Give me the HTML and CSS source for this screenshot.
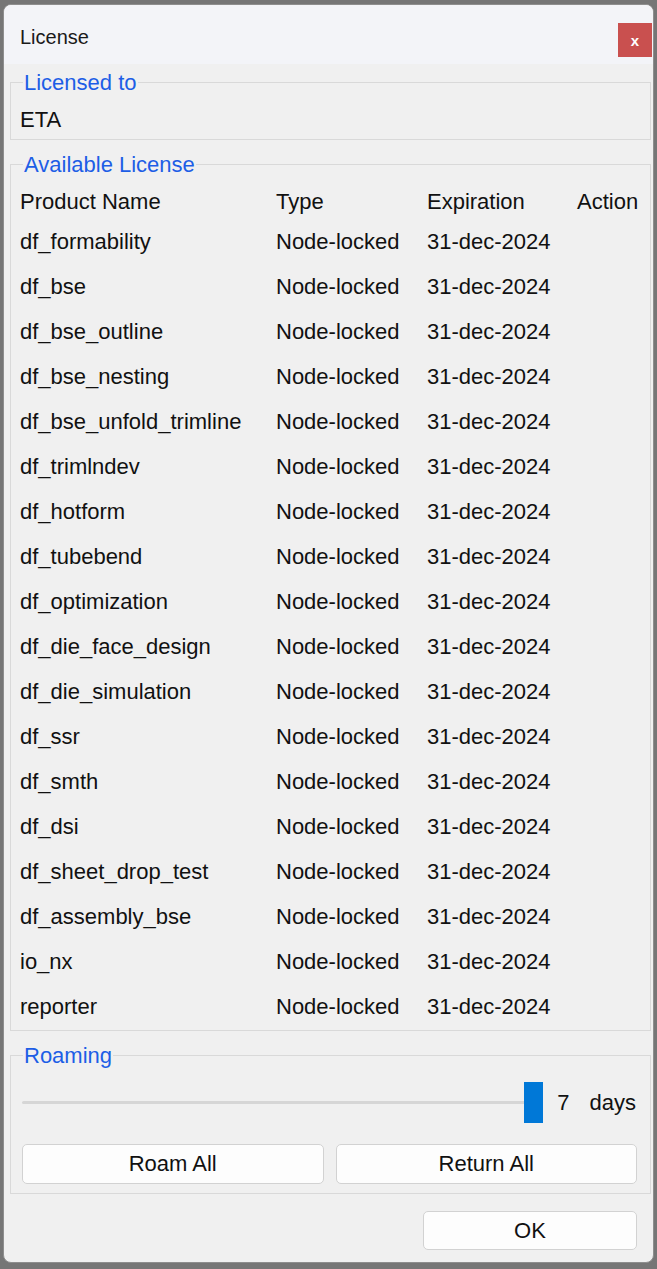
FILE: index.html
```html
<!DOCTYPE html>
<html>
<head>
<meta charset="utf-8">
<title>License</title>
<link rel="stylesheet" href="styles.css">
</head>
<body>
<div class="dialog">
  <div class="titlebar">
    <span class="title">License</span>
    <div class="close">x</div>
  </div>
  <div class="content">
    <fieldset class="group group-owner">
      <legend>Licensed to</legend>
      <div class="owner">ETA</div>
    </fieldset>
    <fieldset class="group group-list">
      <legend>Available License</legend>
      <div class="row head"><span>Product Name</span><span>Type</span><span>Expiration</span><span>Action</span></div>
      <div class="row"><span>df_formability</span><span>Node-locked</span><span>31-dec-2024</span><span></span></div>
      <div class="row"><span>df_bse</span><span>Node-locked</span><span>31-dec-2024</span><span></span></div>
      <div class="row"><span>df_bse_outline</span><span>Node-locked</span><span>31-dec-2024</span><span></span></div>
      <div class="row"><span>df_bse_nesting</span><span>Node-locked</span><span>31-dec-2024</span><span></span></div>
      <div class="row"><span>df_bse_unfold_trimline</span><span>Node-locked</span><span>31-dec-2024</span><span></span></div>
      <div class="row"><span>df_trimlndev</span><span>Node-locked</span><span>31-dec-2024</span><span></span></div>
      <div class="row"><span>df_hotform</span><span>Node-locked</span><span>31-dec-2024</span><span></span></div>
      <div class="row"><span>df_tubebend</span><span>Node-locked</span><span>31-dec-2024</span><span></span></div>
      <div class="row"><span>df_optimization</span><span>Node-locked</span><span>31-dec-2024</span><span></span></div>
      <div class="row"><span>df_die_face_design</span><span>Node-locked</span><span>31-dec-2024</span><span></span></div>
      <div class="row"><span>df_die_simulation</span><span>Node-locked</span><span>31-dec-2024</span><span></span></div>
      <div class="row"><span>df_ssr</span><span>Node-locked</span><span>31-dec-2024</span><span></span></div>
      <div class="row"><span>df_smth</span><span>Node-locked</span><span>31-dec-2024</span><span></span></div>
      <div class="row"><span>df_dsi</span><span>Node-locked</span><span>31-dec-2024</span><span></span></div>
      <div class="row"><span>df_sheet_drop_test</span><span>Node-locked</span><span>31-dec-2024</span><span></span></div>
      <div class="row"><span>df_assembly_bse</span><span>Node-locked</span><span>31-dec-2024</span><span></span></div>
      <div class="row"><span>io_nx</span><span>Node-locked</span><span>31-dec-2024</span><span></span></div>
      <div class="row"><span>reporter</span><span>Node-locked</span><span>31-dec-2024</span><span></span></div>
    </fieldset>
    <fieldset class="group group-roam">
      <legend>Roaming</legend>
      <div class="slider-row">
        <div class="slider"><div class="track"></div><div class="thumb"></div></div>
        <span class="value">7</span>
        <span class="unit">days</span>
      </div>
      <div class="roam-buttons">
        <div class="btn">Roam All</div>
        <div class="btn">Return All</div>
      </div>
    </fieldset>
    <div class="footer">
      <div class="btn ok">OK</div>
    </div>
  </div>
</div>
</body>
</html>
```
FILE: styles.css
```css
html, body {
  margin: 0;
  padding: 0;
}
body {
  background: #767676;
  padding: 4px 3px 0 3px;
  font-family: "Liberation Sans", Arial, sans-serif;
  color: #111111;
}
.dialog {
  background: #f0f0f0;
  border: 1px solid #8e8e8e;
  border-radius: 8px;
  overflow: hidden;
}
.titlebar {
  height: 59px;
  background: #f3f4f8;
  display: flex;
  align-items: center;
  justify-content: space-between;
  padding-left: 16px;
}
.title {
  font-size: 20px;
  line-height: 24px;
  color: #1a1a1a;
  margin-top: 4px;
}
.close {
  align-self: flex-start;
  margin-top: 18px;
  margin-right: 1px;
  width: 34px;
  height: 34px;
  background: #c9504f;
  color: #ffffff;
  font-weight: bold;
  font-size: 15px;
  display: flex;
  align-items: center;
  justify-content: center;
}
.content {
  padding: 0 2px 0 6px;
}
.group {
  margin: 0;
  border: 1px solid #d9d9d9;
  min-inline-size: 0;
}
.group legend {
  font-size: 22px;
  line-height: 25px;
  color: #1d5ee6;
  padding: 0 1px;
  margin-left: 3px;
}
.group-owner {
  margin-top: 6px;
  padding: 12px 9px 7px 9px;
}
.owner {
  font-size: 22px;
  line-height: 25px;
}
.group-list {
  margin-top: 12px;
  padding: 7px 9px 1px 9px;
}
.row {
  display: grid;
  grid-template-columns: 256px 151px 150px 1fr;
  align-items: center;
  height: 45px;
  font-size: 22px;
  line-height: 25px;
  white-space: nowrap;
}
.row.head {
  height: 35px;
}
.group-roam {
  margin-top: 12px;
  padding: 14px 13px 9px 11px;
}
.group-roam legend {
  margin-left: 1px;
}
.slider-row {
  display: flex;
  align-items: center;
  height: 41px;
  font-size: 22px;
}
.slider {
  flex: 1;
  position: relative;
  height: 41px;
  display: flex;
  align-items: center;
}
.track {
  flex: 1;
  height: 3px;
  background: #d6d6d6;
  border-radius: 2px;
}
.thumb {
  position: absolute;
  right: 0;
  top: 0;
  width: 19px;
  height: 41px;
  background: #0078d7;
}
.value {
  margin-left: 14px;
}
.unit {
  margin-left: 20px;
  margin-right: 1px;
}
.roam-buttons {
  margin-top: 21px;
  display: grid;
  grid-template-columns: 1fr 1fr;
  gap: 12px;
}
.btn {
  height: 40px;
  box-sizing: border-box;
  background: #fdfdfd;
  border: 1px solid #d2d2d2;
  border-radius: 5px;
  display: flex;
  align-items: center;
  justify-content: center;
  font-size: 22px;
  color: #111111;
}
.footer {
  display: flex;
  justify-content: flex-end;
  margin-top: 17px;
  padding: 0 14px 12px 0;
}
.btn.ok {
  width: 214px;
  height: 39px;
}
```
